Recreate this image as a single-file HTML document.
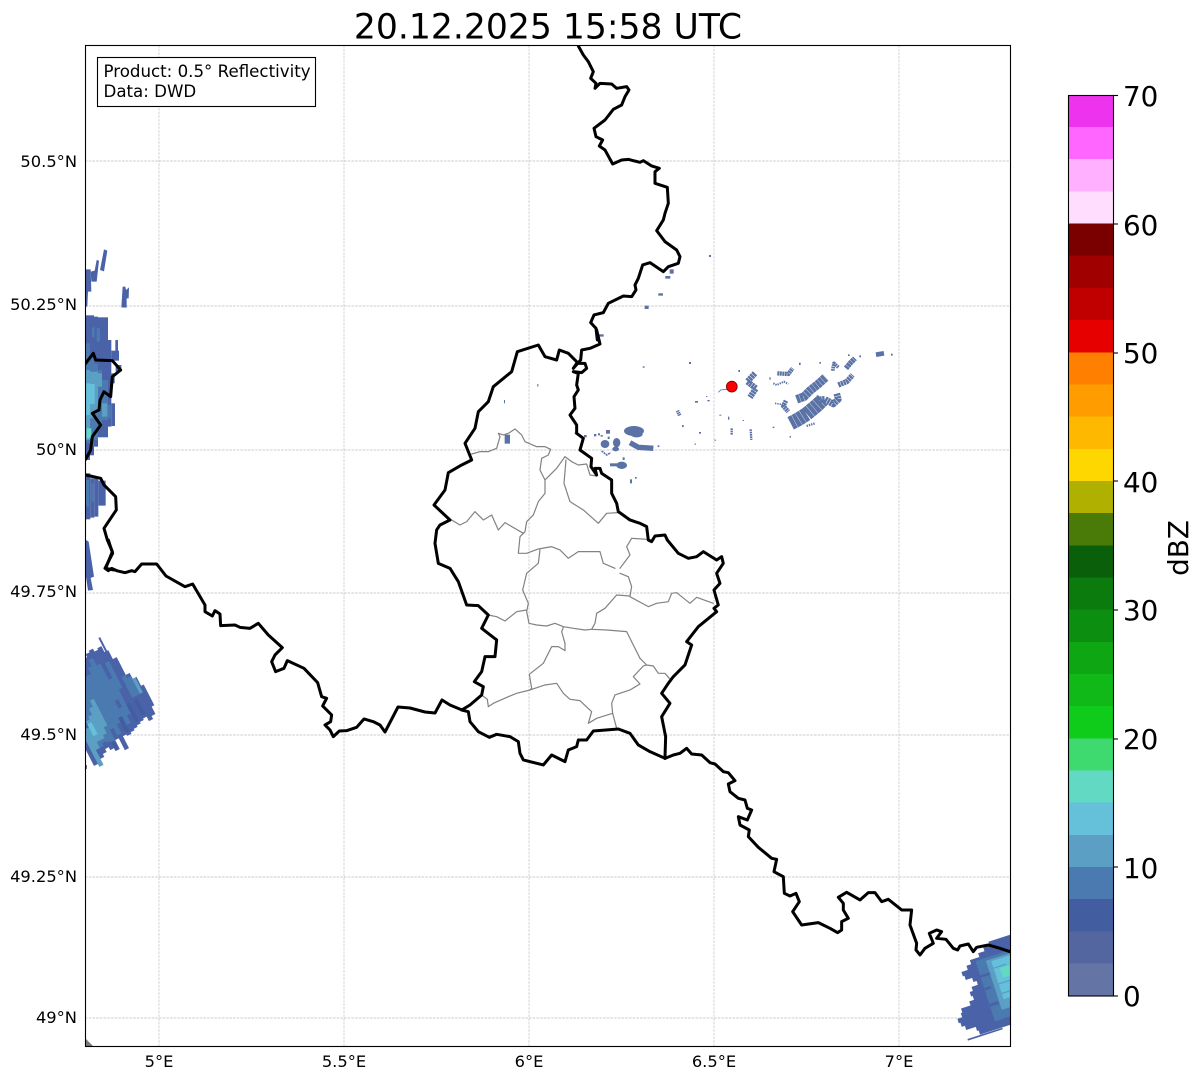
<!DOCTYPE html>
<html><head><meta charset="utf-8"><style>
html,body{margin:0;padding:0;background:#fff}
svg{display:block}
text{font-family:"DejaVu Sans",sans-serif;fill:#000}
.g line{stroke:#bcbcbc;stroke-width:.65;stroke-dasharray:2.6 1.1}
.k polyline{fill:none;stroke:#000;stroke-width:9;stroke-linejoin:round;stroke-linecap:round}
.y polyline{fill:none;stroke:#828282;stroke-width:3.6;stroke-linejoin:round;stroke-linecap:round}
.b *{fill:#5a72a6;stroke:none}
.s polyline{fill:none;stroke:#5a72a6;stroke-linecap:butt;stroke-linejoin:round}
.t{font-size:16.65px}
.l{font-size:16.3px}
.c{font-size:27.8px}
</style></head><body>
<svg width="1202" height="1081" viewBox="0 0 1202 1081" xmlns="http://www.w3.org/2000/svg">
<rect width="1202" height="1081" fill="#fff"/>
<g class="g">
<line x1="159" y1="45" x2="159" y2="1046"/><line x1="344" y1="45" x2="344" y2="1046"/><line x1="529" y1="45" x2="529" y2="1046"/><line x1="714" y1="45" x2="714" y2="1046"/><line x1="899" y1="45" x2="899" y2="1046"/>
<line x1="85" y1="161" x2="1010" y2="161"/><line x1="85" y1="306" x2="1010" y2="306"/><line x1="85" y1="450" x2="1010" y2="450"/><line x1="85" y1="593" x2="1010" y2="593"/><line x1="85" y1="735" x2="1010" y2="735"/><line x1="85" y1="877" x2="1010" y2="877"/><line x1="85" y1="1018" x2="1010" y2="1018"/>
</g>

<!-- left radar echo: vertical bars -->
<g transform="translate(84,240) scale(.3333)">
<polygon fill="#4a62a8" points="5,88 20,88 22,155 12,155 10,200 5,200"/>
<polygon fill="#4a62a8" points="20,95 32,92 38,60 45,62 38,125 22,125"/>
<polygon fill="#4a62a8" points="48,90 60,28 70,32 60,94"/>
<polygon fill="#4a62a8" points="112,202 116,140 124,140 126,150 135,142 134,175 128,175 128,203"/>
<g fill="#4a62a8">
<rect x="5" y="226" width="13" height="434"/><rect x="18" y="226" width="12" height="420"/><rect x="30" y="230" width="12" height="390"/><rect x="42" y="232" width="12" height="360"/><rect x="54" y="232" width="18" height="360"/><rect x="72" y="300" width="10" height="260"/><rect x="82" y="332" width="23" height="30"/><rect x="94" y="300" width="8" height="35"/><rect x="82" y="400" width="10" height="30"/><rect x="82" y="490" width="11" height="68"/><rect x="95" y="375" width="17" height="20"/>
</g>
<g fill="#4a7ab0">
<rect x="5" y="310" width="13" height="300"/><rect x="18" y="345" width="12" height="275"/><rect x="30" y="370" width="12" height="230"/><rect x="42" y="390" width="12" height="170"/><rect x="54" y="420" width="18" height="120"/><rect x="72" y="495" width="8" height="40"/><rect x="38" y="265" width="10" height="40"/><rect x="24" y="262" width="8" height="30"/>
</g>
<g fill="#5b9fc4">
<rect x="5" y="390" width="13" height="210"/><rect x="18" y="395" width="12" height="140"/><rect x="30" y="395" width="12" height="125"/><rect x="42" y="400" width="12" height="40"/><rect x="54" y="490" width="16" height="40"/>
</g>
<g fill="#65c0da">
<rect x="6" y="430" width="12" height="95"/><rect x="18" y="432" width="14" height="60"/>
</g>
<rect x="8" y="565" width="14" height="30" fill="#62d9c3"/>
<g fill="#4a62a8">
<rect x="5" y="700" width="14" height="138"/><rect x="19" y="715" width="12" height="118"/><rect x="31" y="715" width="12" height="115"/><rect x="43" y="722" width="22" height="75"/>
</g>
<g fill="#4a7ab0"><rect x="5" y="720" width="10" height="80"/><rect x="22" y="730" width="8" height="55"/></g>
<polygon fill="#4a62a8" points="6,900 14,905 30,1010 20,1014 27,1050 12,1052 6,1010"/>
</g>

<!-- lower-left radar echo: tilted bars -->
<g transform="translate(84,630) scale(.3333) translate(100,215) rotate(-27)">
<g fill="#4a62a8">
<rect x="-150" y="60" width="14" height="80"/><rect x="-124" y="0" width="14" height="130"/><rect x="-111" y="-40" width="14" height="160"/><rect x="-98" y="-60" width="14" height="170"/><rect x="-85" y="-90" width="14" height="210"/><rect x="-72" y="-110" width="14" height="240"/><rect x="-59" y="-130" width="14" height="230"/><rect x="-46" y="-150" width="14" height="290"/><rect x="-33" y="-160" width="14" height="260"/><rect x="-20" y="-170" width="14" height="275"/><rect x="-7" y="-175" width="14" height="275"/><rect x="6" y="-165" width="14" height="260"/><rect x="19" y="-170" width="14" height="260"/><rect x="32" y="-150" width="14" height="235"/><rect x="36" y="-196" width="6" height="50"/><rect x="45" y="-120" width="14" height="200"/><rect x="58" y="-60" width="14" height="155"/><rect x="71" y="-40" width="14" height="125"/><rect x="84" y="-10" width="10" height="70"/>
</g>
<rect x="-137" y="30" width="14" height="120" fill="#5b9fc4"/>
<g fill="#4a7ab0">
<rect x="-111" y="-20" width="14" height="120"/><rect x="-98" y="-40" width="14" height="130"/><rect x="-85" y="-70" width="14" height="165"/><rect x="-72" y="-90" width="14" height="190"/><rect x="-59" y="-110" width="14" height="175"/><rect x="-46" y="-110" width="14" height="200"/><rect x="-33" y="-130" width="14" height="190"/><rect x="-20" y="-150" width="14" height="195"/><rect x="-7" y="-125" width="14" height="120"/><rect x="-7" y="20" width="14" height="55"/><rect x="6" y="-70" width="14" height="120"/><rect x="19" y="-120" width="14" height="90"/><rect x="45" y="-60" width="14" height="70"/><rect x="58" y="-50" width="14" height="60"/>
</g>
<g fill="#5b9fc4">
<rect x="-124" y="30" width="14" height="70"/><rect x="-111" y="10" width="14" height="70"/><rect x="-98" y="0" width="14" height="80"/><rect x="-85" y="-20" width="14" height="90"/><rect x="-72" y="-40" width="13" height="90"/><rect x="71" y="-40" width="10" height="50"/>
</g>
<g fill="#65c0da"><rect x="-111" y="20" width="14" height="40"/></g>
<g fill="#425ea0"><rect x="-20" y="45" width="12" height="50"/><rect x="20" y="20" width="12" height="60"/><rect x="46" y="20" width="12" height="50"/><rect x="-72" y="100" width="10" height="28"/></g>
</g>
<g transform="translate(84,630) scale(.3333)"><rect x="2" y="405" width="7" height="12" fill="#6b6b6b"/></g>

<!-- lower-right radar echo: tilted rows -->
<g transform="translate(940,920) scale(.3333) translate(210,200) rotate(-18)">
<g fill="#4a62a8">
<rect x="-20" y="-148" width="120" height="14"/><rect x="-40" y="-136" width="140" height="14"/><rect x="-60" y="-125" width="160" height="14"/><rect x="-90" y="-113" width="190" height="14"/><rect x="-105" y="-100" width="205" height="14"/><rect x="-125" y="-87" width="225" height="14"/><rect x="-120" y="-74" width="220" height="14"/><rect x="-100" y="-61" width="200" height="14"/><rect x="-90" y="-48" width="190" height="14"/><rect x="-110" y="-35" width="210" height="14"/><rect x="-120" y="-22" width="220" height="14"/><rect x="-115" y="-9" width="215" height="14"/><rect x="-130" y="4" width="230" height="14"/><rect x="-160" y="17" width="260" height="14"/><rect x="-165" y="30" width="265" height="14"/><rect x="-180" y="43" width="280" height="14"/><rect x="-175" y="56" width="275" height="14"/><rect x="-165" y="69" width="265" height="14"/><rect x="-135" y="82" width="235" height="14"/><rect x="-130" y="95" width="230" height="14"/>
<rect x="-170" y="110" width="110" height="5"/>
</g>
<rect x="-75" y="-105" width="175" height="190" fill="#4a7ab0"/>
<rect x="-45" y="-96" width="145" height="155" fill="#5b9fc4"/>
<rect x="-30" y="-90" width="130" height="120" fill="#65c0da"/>
<rect x="-12" y="-62" width="112" height="30" fill="#62d9c3"/>
<g fill="#4a62a8"><rect x="-75" y="-60" width="30" height="8"/><rect x="-75" y="-20" width="20" height="8"/><rect x="-75" y="30" width="28" height="9"/></g>
<g fill="#5b9fc4"><rect x="-30" y="-70" width="40" height="4"/><rect x="-30" y="-20" width="50" height="4"/><rect x="-30" y="10" width="50" height="4"/></g>
</g>
<polygon fill="#7a7a7a" points="85,1038 93,1046 85,1046"/>

<!-- scattered echoes east -->
<g transform="translate(660,340) scale(.3333)">
<g class="s">
<polyline stroke-width="42" stroke-dasharray="13 1" points="392,250 415,238 440,222 470,197 488,180"/>
<polyline stroke-width="26" stroke-dasharray="10 1" points="410,178 432,170 450,152 475,132 497,112"/>
<polyline stroke-width="20" stroke-dasharray="7 1.5" points="470,180 495,178 520,192 535,178 530,160"/>
<polyline stroke-width="16" stroke-dasharray="7 1.5" points="535,135 560,125 578,105"/>
<polyline stroke-width="16" stroke-dasharray="8 1" points="558,85 572,68 585,55"/>
<polyline stroke-width="14" points="648,44 672,40"/>
<polyline stroke-width="11" stroke-dasharray="5 2" points="518,92 522,70 535,82"/>
<polyline stroke-width="14" stroke-dasharray="6 1.5" points="378,182 370,198 385,215"/>
<polyline stroke-width="18" stroke-dasharray="7 1.5" points="285,100 262,125 288,145 270,172"/>
<polyline stroke-width="13" stroke-dasharray="6 1.5" points="352,100 385,102 398,85"/>
<polyline stroke-width="7" stroke-dasharray="5 2" points="215,265 215,285"/>
<polyline stroke-width="7" stroke-dasharray="5 2" points="272,268 274,300"/>
<polyline stroke-width="11" stroke-dasharray="4 2" points="52,212 60,228"/>
<polyline stroke-width="6" stroke-dasharray="4 3" points="340,130 350,135 372,125 385,132"/>
<polyline stroke-width="5" stroke-dasharray="4 3" points="345,190 375,195"/>
<polyline stroke-width="7" stroke-dasharray="4 3" points="440,258 465,250"/>
</g>
<g class="b">
<rect x="87" y="66" width="6" height="5"/><rect x="235" y="90" width="5" height="6"/><rect x="105" y="183" width="9" height="5"/><rect x="142" y="180" width="7" height="4"/><rect x="66" y="255" width="5" height="6"/><rect x="117" y="276" width="6" height="5"/><rect x="104" y="310" width="3" height="5"/><rect x="163" y="299" width="5" height="3"/><rect x="178" y="224" width="6" height="3"/><rect x="204" y="230" width="4" height="9"/><rect x="328" y="112" width="4" height="7"/><rect x="417" y="68" width="5" height="7"/><rect x="478" y="66" width="5" height="5"/><rect x="564" y="43" width="5" height="5"/><rect x="598" y="46" width="5" height="6"/><rect x="693" y="41" width="5" height="6"/><rect x="389" y="288" width="4" height="5"/><rect x="338" y="260" width="5" height="4"/><rect x="248" y="240" width="4" height="3"/><rect x="138" y="168" width="4" height="3"/>
</g>
<polyline points="175,157 182,150 200,148" fill="none" stroke="#4a7ab0" stroke-width="2.5"/>
</g>

<!-- scattered echoes near border -->
<g transform="translate(570,400) scale(.3333)">
<g class="b">
<ellipse cx="192" cy="93" rx="30" ry="15"/><ellipse cx="200" cy="103" rx="18" ry="9"/>
<ellipse cx="105" cy="132" rx="13" ry="12"/><ellipse cx="140" cy="128" rx="11" ry="14"/><ellipse cx="137" cy="147" rx="10" ry="7"/>
<ellipse cx="155" cy="196" rx="16" ry="11"/><rect x="120" y="190" width="22" height="9"/>
<rect x="72" y="102" width="7" height="7"/><rect x="84" y="100" width="6" height="6"/><rect x="92" y="105" width="6" height="5"/><rect x="108" y="90" width="12" height="11"/><rect x="113" y="110" width="6" height="7"/><rect x="14" y="97" width="7" height="6"/><rect x="42" y="105" width="8" height="7"/><rect x="158" y="172" width="6" height="8"/><rect x="180" y="238" width="6" height="12"/><rect x="195" y="231" width="5" height="5"/><rect x="263" y="136" width="5" height="5"/>
</g>
<g class="s">
<polyline stroke-width="16" points="180,128 205,142 250,145"/>
<polyline stroke-width="5" stroke-dasharray="6 2" points="95,153 110,165 122,158"/>
</g>
</g>
<g transform="translate(430,330) scale(.3333)">
<g class="b">
<rect x="224" y="314" width="16" height="27"/><rect x="322" y="162" width="3" height="8"/><rect x="222" y="210" width="3" height="10"/><rect x="638" y="109" width="6" height="4"/><rect x="777" y="96" width="6" height="6"/>
</g>
</g>
<g transform="translate(570,40) scale(.3333)">
<g class="b">
<rect x="299" y="688" width="12" height="13"/><rect x="286" y="708" width="15" height="8"/><rect x="265" y="760" width="14" height="7"/><rect x="224" y="797" width="12" height="10"/><rect x="417" y="645" width="6" height="6"/><rect x="85" y="883" width="16" height="7"/>
</g>
</g>

<!-- grey district borders -->
<g class="y" transform="translate(430,330) scale(.3333)">
<polyline points="125,372 150,365 175,365 200,355 210,320 205,310 220,315 235,310 255,297 275,315 285,335 320,350 345,350 362,358 355,375 335,385 330,420 345,450 345,490 325,515 310,555 290,575 285,605 270,620 265,670 290,670 325,657 365,650 390,660 415,685 445,665 480,665 510,665 520,700 555,715"/>
<polyline points="345,450 380,415 405,380 425,395 445,405 470,402 480,435 500,438"/>
<polyline points="408,390 402,460 420,515 460,540 505,580 530,550 565,548"/>
<polyline points="65,570 90,585 110,575 135,545 160,570 185,555 205,600 225,578 280,610"/>
<polyline points="650,628 605,625 590,650 600,675 570,715"/>
</g>
<g class="y" transform="translate(430,540) scale(.3333)">
<polyline points="570,100 595,110 605,140 600,168 560,165 525,205 500,220 495,250 485,268 465,270 430,265 400,260 375,250 350,258 320,255 297,250 290,215 295,190 278,150 290,100 325,70 330,30"/>
<polyline points="600,170 655,200 680,190 715,185 725,160 740,158 780,190 800,172 850,190"/>
<polyline points="175,225 200,230 225,243 260,215 290,210"/>
<polyline points="400,262 395,275 405,310 405,332 385,320 365,320 340,370 298,403 305,445 300,450 345,435 380,430 400,460 420,478 450,482 485,515 475,550 500,535 548,520 545,490 555,465 600,450 630,432 610,410 640,378 650,375"/>
<polyline points="485,268 530,270 590,275 610,315 630,355 650,375 670,378 685,400 705,400 718,415"/>
<polyline points="548,520 560,565"/>
<polyline points="300,450 260,460 235,470 190,490 175,500 172,478 155,465"/>
</g>

<!-- black country borders -->
<g class="k" transform="translate(570,40) scale(.3333)">
<polyline points="25,18 40,45 55,65 70,95 62,115 78,130 75,145 90,130 125,132 140,145 170,140 177,150 165,170 155,195 130,208 105,240 72,265 78,290 98,300 88,318 105,330 128,372 155,360 175,358 190,362 210,367 220,362 245,378 268,385 255,395 255,430 292,442 295,490 285,520 280,540 260,572 285,605 320,630 330,650 325,670 295,680 280,695 240,668 218,675 205,715 195,735 198,750 185,770 160,768 115,790 100,818 72,825 62,848 78,865 82,900"/>
</g>
<g class="k" transform="translate(430,330) scale(.3333)">
<polyline points="500,0 510,42 480,55 455,60 452,90 430,115 440,100 465,100 470,115 455,128 430,125 445,130 440,165 445,180 432,200 435,235 420,255 440,285 440,310 460,325 450,360 485,385 483,410 500,435 495,415 510,415 515,430 545,450 545,490 560,520 565,545 600,570 630,580 650,590 655,630 665,635 675,618 705,615 712,630"/>
<polyline points="440,95 415,70 388,60 380,90 345,80 325,45 262,65 245,125 190,170 175,215 145,245 135,295 105,340 125,390 95,405 55,428 45,480 12,525 60,570 30,585 20,600 15,640"/>
</g>
<g class="k" transform="translate(430,540) scale(.3333)">
<polyline points="15,10 25,70 60,85 85,125 110,195 145,197 175,225 155,265 200,300 195,350 165,350 155,395 133,425 160,440 155,465 120,495 95,510 115,515 120,545 145,575 178,592 200,583 240,590 265,605 270,640 280,660 340,675 365,645 405,665 415,630 440,620 445,600 470,600 490,573 565,567 600,580 625,615 660,635 705,655"/>
<polyline points="705,655 707,590 695,530 720,490 695,460 715,430 730,410 765,375 785,315 770,305 805,260 860,215 852,205 865,195 852,150 870,130 860,100 880,70 875,50 860,60 820,35 800,50 775,55 745,40 712,0"/>
</g>
<g class="k" transform="translate(660,740) scale(.3333)">
<polyline points="15,55 40,45 60,40 80,25 95,42 125,45 150,68 165,72 190,95 205,98 225,122 205,132 210,155 235,175 255,180 262,205 275,210 262,240 235,230 240,255 268,270 265,290 295,322 335,355 350,358 342,395 370,410 373,460 390,468 408,460 418,485 398,515 425,555 475,548 510,565 533,578 545,570 545,545 565,535 550,510 550,490 535,472 560,457 600,480 625,458 645,458 665,485 685,478 725,510 755,510 750,555 770,610 768,630 780,645 795,625 820,610 808,580 830,570 845,575 830,595 858,598 880,625 893,630 900,618 925,612 940,635 950,622 985,615 1020,625 1050,635"/>
</g>
<g class="k" transform="translate(84,240) scale(.3333)">
<polyline points="5,370 28,340 35,360 85,362 110,390 85,410 80,470 60,455 48,480 45,510 25,520 50,555 25,590 20,630 5,658"/>
<polyline points="5,705 50,715 60,735 95,770 97,810 60,865 70,900 85,935 65,985 90,990"/>
</g>
<g class="k" transform="translate(80,540) scale(.3333)">
<polyline points="85,0 98,40 75,85 85,92 95,85 110,92 135,98 155,92 165,95 185,72 230,72 258,108 315,140 338,132 375,195 375,215 397,228 405,212 420,222 422,257 465,255 480,262 510,265 535,250 565,285 607,323 585,345 575,365 587,395 612,385 622,362 672,385 713,428 725,470 740,475 728,498 755,525 752,545 735,555 750,570 760,590 778,573 800,572 830,562 852,537 880,545 900,555"/>
</g>
<polyline fill="none" stroke="#000" stroke-width="3" stroke-linejoin="round" points="380,725 385,732 398,707 410,708 425,712 435,713 442,700 450,705 462,710"/>

<!-- white mask outside axes -->
<rect x="0" y="0" width="85" height="1081" fill="#fff"/>
<rect x="1010.5" y="0" width="60" height="1081" fill="#fff"/>
<rect x="85" y="1046.5" width="930" height="34" fill="#fff"/>
<rect x="85" y="0" width="930" height="45" fill="#fff"/>

<!-- station marker -->
<circle cx="731.8" cy="386.6" r="5.4" fill="#f00" stroke="#7a0000" stroke-width=".8"/>

<!-- axes frame -->
<rect x="85.5" y="45.5" width="925" height="1001" fill="none" stroke="#000" stroke-width="1.1"/>

<!-- title -->
<text x="548" y="38.5" text-anchor="middle" font-size="34.6">20.12.2025 15:58 UTC</text>

<!-- info box -->
<rect x="97.5" y="57.5" width="218" height="49" fill="#fff" stroke="#000" stroke-width="1.1"/>
<text x="103.5" y="77" class="t">Product: 0.5° Reflectivity</text>
<text x="103.5" y="97" class="t">Data: DWD</text>

<!-- axis labels -->
<g class="l" text-anchor="end">
<text x="77" y="167">50.5°N</text>
<text x="77" y="310">50.25°N</text>
<text x="77" y="455">50°N</text>
<text x="77" y="597">49.75°N</text>
<text x="77" y="740">49.5°N</text>
<text x="77" y="882">49.25°N</text>
<text x="77" y="1023">49°N</text>
</g>
<g class="l" text-anchor="middle">
<text x="159" y="1067">5°E</text>
<text x="344" y="1067">5.5°E</text>
<text x="529" y="1067">6°E</text>
<text x="714" y="1067">6.5°E</text>
<text x="899" y="1067">7°E</text>
</g>

<!-- colorbar -->
<g shape-rendering="crispEdges">
<rect x="1068" y="95.5" width="45" height="32.5" fill="#ee33ee"/>
<rect x="1068" y="127" width="45" height="32.5" fill="#ff66ff"/>
<rect x="1068" y="159" width="45" height="33" fill="#ffb0ff"/>
<rect x="1068" y="191.5" width="45" height="32.5" fill="#ffddff"/>
<rect x="1068" y="223.5" width="45" height="32.5" fill="#7a0000"/>
<rect x="1068" y="255.7" width="45" height="32.5" fill="#a00000"/>
<rect x="1068" y="288" width="45" height="32.5" fill="#c00000"/>
<rect x="1068" y="320" width="45" height="32.5" fill="#e60000"/>
<rect x="1068" y="352.3" width="45" height="32.5" fill="#ff8000"/>
<rect x="1068" y="384.5" width="45" height="32.5" fill="#ff9c00"/>
<rect x="1068" y="416.6" width="45" height="32.5" fill="#ffb800"/>
<rect x="1068" y="448.8" width="45" height="32.5" fill="#ffd700"/>
<rect x="1068" y="481" width="45" height="32.5" fill="#b0b000"/>
<rect x="1068" y="513.2" width="45" height="32.5" fill="#4a7a08"/>
<rect x="1068" y="545.4" width="45" height="32.5" fill="#0a5f0a"/>
<rect x="1068" y="577.5" width="45" height="32.5" fill="#0b7b0e"/>
<rect x="1068" y="609.7" width="45" height="32.5" fill="#0c8e10"/>
<rect x="1068" y="641.9" width="45" height="32.5" fill="#0fa614"/>
<rect x="1068" y="674" width="45" height="32.5" fill="#10b818"/>
<rect x="1068" y="706.2" width="45" height="32.5" fill="#10cc1a"/>
<rect x="1068" y="738.4" width="45" height="32.5" fill="#3ed96f"/>
<rect x="1068" y="770.5" width="45" height="32.5" fill="#62d9c3"/>
<rect x="1068" y="802.7" width="45" height="32.5" fill="#65c0da"/>
<rect x="1068" y="834.9" width="45" height="32.5" fill="#5b9fc4"/>
<rect x="1068" y="867" width="45" height="32.5" fill="#4b7ab0"/>
<rect x="1068" y="899.2" width="45" height="32.5" fill="#425ea0"/>
<rect x="1068" y="931.4" width="45" height="32.5" fill="#53669f"/>
<rect x="1068" y="963.6" width="45" height="32.5" fill="#6374a5"/>
</g>
<rect x="1068.5" y="95.5" width="45" height="900.5" fill="none" stroke="#000" stroke-width="1.1"/>
<g stroke="#000" stroke-width="1.1">
<line x1="1113" y1="95.5" x2="1118" y2="95.5"/><line x1="1113" y1="224" x2="1118" y2="224"/><line x1="1113" y1="353" x2="1118" y2="353"/><line x1="1113" y1="481" x2="1118" y2="481"/><line x1="1113" y1="610" x2="1118" y2="610"/><line x1="1113" y1="739" x2="1118" y2="739"/><line x1="1113" y1="867" x2="1118" y2="867"/><line x1="1113" y1="996" x2="1118" y2="996"/>
</g>
<g class="c">
<text x="1123" y="106">70</text>
<text x="1123" y="235">60</text>
<text x="1123" y="363">50</text>
<text x="1123" y="492">40</text>
<text x="1123" y="620">30</text>
<text x="1123" y="749">20</text>
<text x="1123" y="878">10</text>
<text x="1123" y="1006">0</text>
</g>
<text class="c" transform="translate(1188,548) rotate(-90)" text-anchor="middle">dBZ</text>
</svg>
</body></html>
